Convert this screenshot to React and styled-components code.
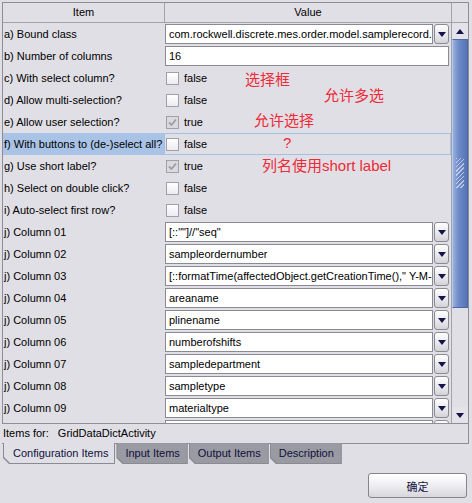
import React from "react";
import styled, { createGlobalStyle } from "styled-components";

const rows = [
  { label: "a) Bound class", kind: "combo", value: "com.rockwell.discrete.mes.order.model.samplerecord.MESSampleRecord" },
  { label: "b) Number of columns", kind: "text", value: "16" },
  { label: "c) With select column?", kind: "check", value: false },
  { label: "d) Allow multi-selection?", kind: "check", value: false },
  { label: "e) Allow user selection?", kind: "check", value: true },
  { label: "f) With buttons to (de-)select all?", kind: "check", value: false, selected: true },
  { label: "g) Use short label?", kind: "check", value: true },
  { label: "h) Select on double click?", kind: "check", value: false },
  { label: "i) Auto-select first row?", kind: "check", value: false },
  { label: "j) Column 01", kind: "combo", value: '[::""]//"seq"' },
  { label: "j) Column 02", kind: "combo", value: "sampleordernumber" },
  { label: "j) Column 03", kind: "combo", value: '[::formatTime(affectedObject.getCreationTime()," Y-M-D H:m:s")]' },
  { label: "j) Column 04", kind: "combo", value: "areaname" },
  { label: "j) Column 05", kind: "combo", value: "plinename" },
  { label: "j) Column 06", kind: "combo", value: "numberofshifts" },
  { label: "j) Column 07", kind: "combo", value: "sampledepartment" },
  { label: "j) Column 08", kind: "combo", value: "sampletype" },
  { label: "j) Column 09", kind: "combo", value: "materialtype" },
  { label: "j) Column 10", kind: "combo", value: "materialcode" },
];

const notes = [
  { text: "选择框", top: 72, left: 245 },
  { text: "允许多选", top: 88, left: 324 },
  { text: "允许选择", top: 113, left: 254 },
  { text: "?", top: 135, left: 283 },
  { text: "列名使用short label", top: 158, left: 262 },
];

const tabs = ["Configuration Items", "Input Items", "Output Items", "Description"];

const GlobalStyle = createGlobalStyle`
  body {
    margin: 0;
    background: #e0dfe5;
    font-family: "Liberation Sans", Arial, sans-serif;
    font-size: 11px;
    color: #000;
  }
`;

const Window = styled.div`
  position: relative;
  width: 472px;
  height: 503px;
  overflow: hidden;
  display: flex;
  flex-direction: column;
`;

const Panel = styled.div`
  flex: none;
  margin: 2px 3px 0 2px;
  border-bottom: 1px solid #8e8e96;
  border-right: 1px solid #8e8e96;
`;

const Table = styled.div`
  border: 1px solid #8e8e96;
  border-right: none;
  display: flex;
  flex-direction: column;
`;

const HeaderRow = styled.div`
  display: flex;
  height: 19px;
  border-bottom: 1px solid #a2a2aa;
`;

const HeaderCell = styled.div`
  width: ${(p) => p.width}px;
  flex: ${(p) => (p.width ? "none" : 1)};
  border-right: 1px solid #a2a2aa;
  text-align: center;
  line-height: 18px;
`;

const Corner = styled.div`
  width: 16px;
`;

const Body = styled.div`
  display: flex;
  height: 400px;
`;

const Rows = styled.div`
  flex: 1;
  min-width: 0;
  overflow: hidden;
`;

const Row = styled.div`
  display: flex;
  height: 22px;
`;

const LabelCell = styled.div`
  flex: none;
  width: 160px;
  padding-left: 1px;
  line-height: 22px;
  white-space: nowrap;
  overflow: hidden;
  background: ${(p) => (p.selected ? "#a9c3e6" : "transparent")};
`;

const ValueCell = styled.div`
  flex: 1;
  min-width: 0;
  display: flex;
  align-items: center;
  padding: 0 2px 0 1px;
  box-shadow: ${(p) => (p.selected ? "inset 0 0 0 1px #a7bfe2" : "none")};
`;

const TextField = styled.div`
  flex: 1;
  min-width: 0;
  height: 18px;
  border: 1px solid #8a8a92;
  background: #fff;
  padding: 0 3px;
  line-height: 18px;
  white-space: nowrap;
  overflow: hidden;
`;

const Combo = styled.div`
  flex: 1;
  min-width: 0;
  display: flex;
  gap: 1px;
  height: 20px;
`;

const ComboButton = styled.div`
  flex: none;
  width: 13px;
  border: 1px solid #8a8a92;
  border-radius: 3px;
  background: linear-gradient(#ffffff, #e6e6ea 60%, #d2d2d8);
  display: flex;
  align-items: center;
  justify-content: center;
`;

const DownArrow = styled.div`
  width: 0;
  height: 0;
  border-left: 4px solid transparent;
  border-right: 4px solid transparent;
  border-top: 5px solid #14144a;
`;

const UpArrow = styled.div`
  width: 0;
  height: 0;
  border-left: 4px solid transparent;
  border-right: 4px solid transparent;
  border-bottom: 5px solid #14144a;
`;

const CheckWrap = styled.div`
  display: flex;
  align-items: center;
  gap: 5px;
  padding-left: 1px;
`;

const Box = styled.div`
  width: 11px;
  height: 11px;
  border: 1px solid #a0a0aa;
  background: ${(p) => (p.checked ? "#dadade" : "linear-gradient(#ffffff, #ececf0)")};
  display: flex;
  align-items: center;
  justify-content: center;
`;

const ScrollBar = styled.div`
  flex: none;
  width: 16px;
  border-left: 1px solid #a2a2aa;
  display: flex;
  flex-direction: column;
`;

const ScrollButton = styled.div`
  height: 16px;
  display: flex;
  align-items: center;
  justify-content: center;
  background: #e4e3e9;
`;

const Thumb = styled.div`
  position: relative;
  height: 267px;
  border: 1px solid #4e68a6;
  border-left-color: #b8c8e8;
  background: linear-gradient(to right, #9ab0dc, #6e8bc8 40%, #5574b7);

  &::after {
    content: "";
    position: absolute;
    left: 3px;
    right: 3px;
    top: 118px;
    height: 30px;
    background: repeating-linear-gradient(135deg, rgba(255, 255, 255, 0.55) 0 1px, transparent 1px 3px);
  }
`;

const Track = styled.div`
  flex: 1;
`;

const ItemsFor = styled.div`
  height: 19px;
  line-height: 19px;
  padding-left: 1px;
  display: flex;
  gap: 9px;
  white-space: nowrap;
`;

const TabStrip = styled.div`
  flex: none;
  display: flex;
  margin: -1px 0 0 3px;
`;

const Tab = styled.div`
  height: 20px;
  padding: 0 1px 1px 1px;
  background: #8a8a92;
  clip-path: polygon(0 0, 100% 0, 100% 100%, 6px 100%, 0 calc(100% - 6px));
  margin-left: ${(p) => (p.first ? 0 : 1)}px;
`;

const TabFace = styled.div`
  height: 100%;
  padding: 0 ${(p) => (p.active ? 6 : 7)}px 0 ${(p) => (p.active ? 9 : 8)}px;
  line-height: 20px;
  white-space: nowrap;
  color: #10103c;
  background: ${(p) => (p.active ? "#e0dfe5" : "#9a9aa2")};
  clip-path: polygon(0 0, 100% 0, 100% 100%, 6px 100%, 0 calc(100% - 6px));
`;

const Footer = styled.div`
  flex: none;
  display: flex;
  justify-content: flex-end;
  padding: 9px 5px 0 0;
`;

const Button = styled.button`
  width: 99px;
  height: 25px;
  border: 1px solid #85858d;
  border-radius: 3px;
  background: linear-gradient(#ffffff, #ececf0 55%, #d6d6dc);
  color: #14143e;
  font-family: "Noto Sans CJK SC", "Liberation Sans", sans-serif;
  font-size: 11px;
  padding: 0;
`;

const Note = styled.div`
  position: absolute;
  color: #ee2a36;
  font-family: "Liberation Sans", "Noto Sans CJK SC", sans-serif;
  font-size: 15px;
  line-height: 15px;
  white-space: nowrap;
`;

const Check = () => (
  <svg width="9" height="9" viewBox="0 0 9 9">
    <path d="M1 4.5 L3.5 7 L8 1.5" fill="none" stroke="#9c9ca6" strokeWidth="1.8" />
  </svg>
);

const Value = ({ row }) => {
  if (row.kind === "check") {
    return (
      <CheckWrap>
        <Box checked={row.value}>{row.value && <Check />}</Box>
        <span>{row.value ? "true" : "false"}</span>
      </CheckWrap>
    );
  }
  if (row.kind === "text") {
    return <TextField>{row.value}</TextField>;
  }
  return (
    <Combo>
      <TextField>{row.value}</TextField>
      <ComboButton>
        <DownArrow />
      </ComboButton>
    </Combo>
  );
};

export default function App() {
  return (
    <Window>
      <GlobalStyle />
      <Panel>
        <Table>
          <HeaderRow>
            <HeaderCell width={161}>Item</HeaderCell>
            <HeaderCell>Value</HeaderCell>
            <Corner />
          </HeaderRow>
          <Body>
            <Rows>
              {rows.map((row) => (
                <Row key={row.label}>
                  <LabelCell selected={row.selected}>{row.label}</LabelCell>
                  <ValueCell selected={row.selected}>
                    <Value row={row} />
                  </ValueCell>
                </Row>
              ))}
            </Rows>
            <ScrollBar>
              <ScrollButton>
                <UpArrow />
              </ScrollButton>
              <Thumb />
              <Track />
              <ScrollButton>
                <DownArrow />
              </ScrollButton>
            </ScrollBar>
          </Body>
        </Table>
        <ItemsFor>
          <span>Items for:</span>
          <span>GridDataDictActivity</span>
        </ItemsFor>
      </Panel>
      <TabStrip>
        {tabs.map((t, i) => (
          <Tab key={t} first={i === 0}>
            <TabFace active={i === 0}>{t}</TabFace>
          </Tab>
        ))}
      </TabStrip>
      <Footer>
        <Button>确定</Button>
      </Footer>
      {notes.map((n) => (
        <Note key={n.text} style={{ top: n.top, left: n.left }}>
          {n.text}
        </Note>
      ))}
    </Window>
  );
}
